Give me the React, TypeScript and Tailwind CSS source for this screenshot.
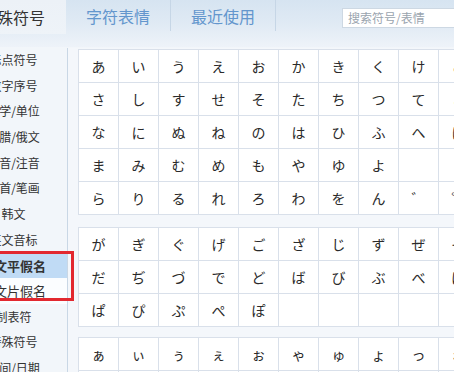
import React from "react";

const categories = [
  "标点符号",
  "数字序号",
  "数学/单位",
  "希腊/俄文",
  "拼音/注音",
  "部首/笔画",
  "韩文",
  "英文音标",
  "日文平假名",
  "日文片假名",
  "制表符",
  "特殊符号",
  "时间/日期",
];

const blocks: string[][][] = [
  [
    ["あ", "い", "う", "え", "お", "か", "き", "く", "け", "こ"],
    ["さ", "し", "す", "せ", "そ", "た", "ち", "つ", "て", "と"],
    ["な", "に", "ぬ", "ね", "の", "は", "ひ", "ふ", "へ", "ほ"],
    ["ま", "み", "む", "め", "も", "や", "ゆ", "よ", "", ""],
    ["ら", "り", "る", "れ", "ろ", "わ", "を", "ん", "゛", "゜"],
  ],
  [
    ["が", "ぎ", "ぐ", "げ", "ご", "ざ", "じ", "ず", "ぜ", "ぞ"],
    ["だ", "ぢ", "づ", "で", "ど", "ば", "び", "ぶ", "べ", "ぼ"],
    ["ぱ", "ぴ", "ぷ", "ぺ", "ぽ", "", "", "", "", ""],
  ],
  [
    ["ぁ", "ぃ", "ぅ", "ぇ", "ぉ", "ゃ", "ゅ", "ょ", "っ", "ゎ"],
    ["ァ", "ィ", "ゥ", "ェ", "ォ", "ャ", "ュ", "ョ", "ッ", "ヮ"],
  ],
];

const CharBlock = ({ rows }: { rows: string[][] }) => (
  <div className="grid grid-cols-[repeat(10,39px)] gap-px w-max bg-[#d9e0ea] border border-[#d9e0ea]">
    {rows.flat().map((ch, i) => (
      <div
        key={i}
        className="h-[32px] bg-white flex items-center justify-center text-[14px] text-[#2a2a2a] font-['Noto_Sans_CJK_JP',sans-serif]"
      >
        {ch}
      </div>
    ))}
  </div>
);

export default function App() {
  return (
    <div className="relative w-[454px] h-[372px] overflow-hidden bg-[#f2f6fa] font-['Noto_Sans_CJK_SC','Noto_Sans_CJK_JP',sans-serif]">
      {/* 顶部标签 */}
      <div className="flex items-start h-[47px] bg-gradient-to-b from-[#d6e4f1] via-[#e0eaf4] to-[#eef3f9]">
        <div className="shrink-0 ml-[-40px] w-[106px] h-[34px] flex items-center justify-center bg-gradient-to-b from-[#ecf1f7] to-[#eef3f8] text-[16px] text-[#333]">
          特殊符号
        </div>
        <div className="shrink-0 w-[105px] h-[31px] flex items-center justify-center border-r border-[#c6d6e6] text-[16px] text-[#6396cd]">
          字符表情
        </div>
        <div className="shrink-0 w-[105px] h-[31px] flex items-center justify-center border-r border-[#c6d6e6] text-[16px] text-[#6396cd]">
          最近使用
        </div>
        <div className="shrink-0 ml-[66px] mt-[8px] w-[140px] h-[20px] bg-white border border-[#cdd8e3] flex items-center pl-[5px] text-[12px] text-[#9aa4ae]">
          搜索符号/表情
        </div>
      </div>

      <div className="flex">
        {/* 左侧分类 */}
        <div className="ml-[-40px] w-[107px] shrink-0 flex flex-col">
          {categories.map((c, i) => (
            <div
              key={c}
              className={
                "h-[25.7px] flex items-center justify-center text-[#333] " +
                (i === 8
                  ? "bg-[#c0dbf5] font-bold text-[13px]"
                  : i === 9
                  ? "bg-[#fbfdff] text-[13px]"
                  : "text-[12px]")
              }
            >
              {c}
            </div>
          ))}
        </div>

        {/* 右侧符号 */}
        <div className="shrink-0 mt-px pt-px pl-[10px] border-l border-[#c9d7e5] bg-[#f4f7fb] flex flex-col h-[340px]">
          <CharBlock rows={blocks[0]} />
          <div className="mt-[12px]">
            <CharBlock rows={blocks[1]} />
          </div>
          <div className="mt-[10px]">
            <CharBlock rows={blocks[2]} />
          </div>
        </div>
      </div>

      {/* 红框标注 */}
      <div className="absolute left-[-6px] top-[251px] w-[80px] h-[50px] border-[3px] border-[#e2282f] pointer-events-none" />
    </div>
  );
}
